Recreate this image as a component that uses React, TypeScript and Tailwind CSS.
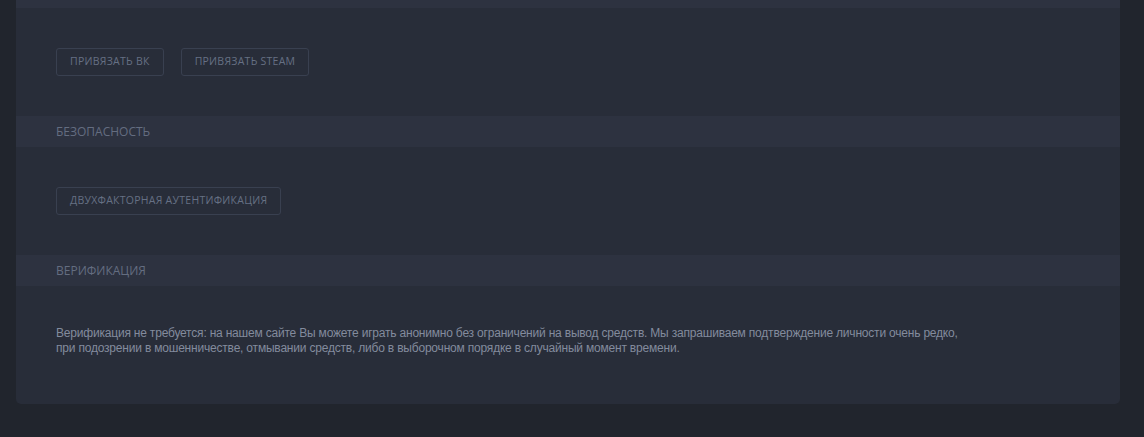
import React from "react";

function Bar({ title }: { title?: string }) {
  return (
    <div className="flex h-[31px] items-center bg-[#2d3240] px-10 text-[12px] font-medium uppercase text-[#646d80]">
      {title}
    </div>
  );
}

function Btn({ children }: { children: React.ReactNode }) {
  return (
    <button className="h-[28px] rounded-[3px] border border-[#394050] px-[13px] text-[10.5px] uppercase tracking-[0.025em] text-[#667084]">
      {children}
    </button>
  );
}

export default function App() {
  return (
    <div
      className="min-h-[437px] w-full bg-[#21252d] pr-6 pl-4 pb-[34px]"
      style={{ fontFamily: '"Open Sans", "Noto Sans", sans-serif' }}
    >
      <div className="overflow-hidden rounded-b-[5px] bg-[#282d39]">
        <div className="h-2 bg-[#2d3240]" />
        <div className="flex gap-[17px] px-10 py-10">
          <Btn>Привязать ВК</Btn>
          <Btn>Привязать Steam</Btn>
        </div>

        <Bar title="Безопасность" />
        <div className="flex px-10 py-10">
          <Btn>Двухфакторная аутентификация</Btn>
        </div>

        <Bar title="Верификация" />
        <div className="px-10 pt-10 pb-[48px] font-['Liberation_Sans',sans-serif] text-[12px] leading-[15px] tracking-[-0.2px] text-[#838b9d]">
          Верификация не требуется: на нашем сайте Вы можете играть анонимно без ограничений на вывод средств. Мы запрашиваем подтверждение личности очень редко,
          <br />
          при подозрении в мошенничестве, отмывании средств, либо в выборочном порядке в случайный момент времени.
        </div>
      </div>
    </div>
  );
}
